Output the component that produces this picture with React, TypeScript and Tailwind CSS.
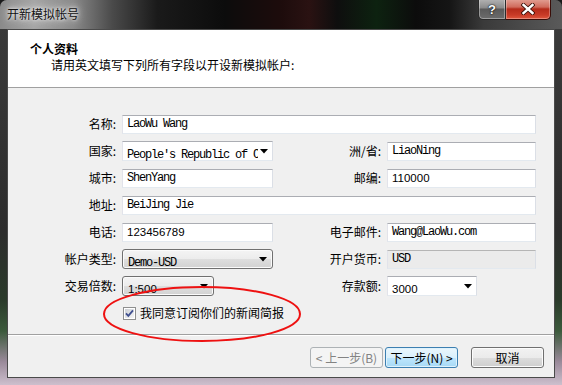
import React from "react";

const mono = "font-['Liberation_Mono',monospace] text-[12px] tracking-[-1.2px]";
const digits = "font-['Liberation_Sans',sans-serif] text-[11.5px]";

function Arrow() {
  return (
    <svg width="8" height="5" viewBox="0 0 8 5" className="shrink-0">
      <polygon points="0,0 8,0 4,4.5" fill="#000" />
    </svg>
  );
}

function TextBox({
  value,
  num = false,
  disabled = false,
  className = "",
}: {
  value: string;
  num?: boolean;
  disabled?: boolean;
  className?: string;
}) {
  return (
    <div
      className={`h-[19px] border border-[#abadb3] border-l-[#e2e3ea] border-r-[#dbdfe6] border-b-[#e3e9ef] ${
        disabled ? "bg-[#ebebeb] border-t-[#b5b5b5] border-l-[#d0d0d0] border-r-[#d0d0d0] border-b-[#d8d8d8]" : "bg-white"
      } flex items-center pl-[4px] overflow-hidden whitespace-nowrap ${className}`}
    >
      <span className={`${num ? digits : mono} leading-[17px] text-black`}>{value}</span>
    </div>
  );
}

function WhiteCombo({ value, num = false, className = "" }: { value: string; num?: boolean; className?: string }) {
  return (
    <div
      className={`h-[20px] border border-[#abadb3] border-l-[#e2e3ea] border-r-[#dbdfe6] border-b-[#e3e9ef] bg-white flex items-center pl-[4px] pr-[4px] gap-[2px] ${className}`}
    >
      <div className="flex-1 overflow-hidden whitespace-nowrap">
        <span className={`${num ? digits : mono} leading-[18px] text-black`}>{value}</span>
      </div>
      <Arrow />
    </div>
  );
}

function ButtonCombo({ value, num = false, className = "" }: { value: string; num?: boolean; className?: string }) {
  return (
    <div
      className={`h-[20px] rounded-[3px] border border-[#707070] bg-[linear-gradient(180deg,#f4f4f4_0%,#ececec_50%,#dedede_51%,#d2d2d2_100%)] shadow-[inset_0_0_0_1px_#fbfbfb] flex items-center pl-[5px] pr-[5px] ${className}`}
    >
      <div className="flex-1 overflow-hidden whitespace-nowrap">
        <span className={`${num ? digits : mono} leading-[18px] text-black`}>{value}</span>
      </div>
      <Arrow />
    </div>
  );
}

function Label({ children }: { children: React.ReactNode }) {
  return <div className="text-right pr-[6px] text-[12px] leading-[16px] text-black whitespace-nowrap">{children}</div>;
}

function CheckBox() {
  return (
    <svg width="13" height="13" viewBox="0 0 13 13" className="shrink-0">
      <defs>
        <linearGradient id="cbg" x1="0" y1="0" x2="1" y2="1">
          <stop offset="0" stopColor="#cbcfd5" />
          <stop offset="1" stopColor="#f6f6f6" />
        </linearGradient>
      </defs>
      <rect x="0.5" y="0.5" width="12" height="12" fill="#fff" stroke="#8e8f8f" />
      <rect x="2" y="2" width="9" height="9" fill="url(#cbg)" />
      <path d="M3 6.3 L5.3 8.8 L10 3.3" fill="none" stroke="#3f4f8f" strokeWidth="1.8" />
    </svg>
  );
}

function WinButton({
  children,
  variant = "normal",
}: {
  children: React.ReactNode;
  variant?: "normal" | "disabled" | "focused";
}) {
  const styles =
    variant === "disabled"
      ? "border-[#adb2b5] bg-[#f4f4f4] text-[#838383]"
      : variant === "focused"
      ? "border-[#3c7fb1] bg-[linear-gradient(180deg,#eaf6fd_0%,#d9f0fc_50%,#bee6fd_51%,#a7d9f5_100%)] text-black shadow-[inset_0_0_0_1px_#dff2fc]"
      : "border-[#707070] bg-[linear-gradient(180deg,#f2f2f2_0%,#ebebeb_50%,#dddddd_51%,#cfcfcf_100%)] text-black shadow-[inset_0_0_0_1px_#fcfcfc]";
  return (
    <div
      className={`w-[73px] h-[21px] rounded-[3px] border flex items-center justify-center text-[12px] leading-[16px] whitespace-nowrap ${styles}`}
    >
      {children}
    </div>
  );
}

export default function App() {
  return (
    <div className="w-[562px] h-[385px] relative overflow-hidden font-['Noto_Sans_CJK_SC','Liberation_Sans',sans-serif] bg-[#1a1a1a]">
      <div className="w-[562px] h-[385px] rounded-t-[7px] overflow-hidden flex flex-col bg-[linear-gradient(180deg,#3c3c3c_0%,#2c2c2c_60%,#2a3a2a_78%,#3c5a3c_86%,#9a8a9a_94%,#cdbfcd_100%)]">
        {/* Title bar */}
        <div className="h-[29px] shrink-0 flex items-start justify-between bg-[linear-gradient(90deg,#8a8a8a_0%,#a5a5a5_6%,#8a8a8a_13%,#4a4a4a_20%,#1a1a1a_28%,#0c0c0c_40%,#1d0c0c_50%,#2a1212_55%,#0e0e0e_60%,#0d2210_67%,#0c0c0c_74%,#151515_80%,#3a3a3a_86%,#5a5a5a_100%)]">
          <span className="ml-[7px] mt-[6px] text-[12px] leading-[16px] text-[#111] [text-shadow:0_0_6px_#e6e6e6,0_0_10px_#dcdcdc,0_0_3px_#ffffff]">
            开新模拟帐号
          </span>
          <div className="flex mr-[11px] -mt-[1px]">
            <div className="w-[28px] h-[21px] rounded-bl-[5px] border border-[#2a2a2a] border-t-0 bg-[linear-gradient(180deg,#b4b4b4_0%,#8a8a8a_45%,#5a5a5a_50%,#6c6c6c_100%)] shadow-[inset_0_0_0_1px_rgba(255,255,255,0.35)] flex items-center justify-center">
              <span className="font-['Liberation_Sans',sans-serif] font-bold text-[13px] leading-[13px] text-white [text-shadow:0_0_2px_#000,0_0_1px_#000]">
                ?
              </span>
            </div>
            <div className="w-[45px] h-[21px] rounded-br-[5px] border border-[#3a0d08] border-t-0 border-l-0 bg-[linear-gradient(180deg,#e3a296_0%,#d06b5c_40%,#b52b1a_50%,#c93b27_80%,#e0583e_100%)] shadow-[inset_0_0_0_1px_rgba(255,255,255,0.3)] flex items-center justify-center">
              <svg width="14" height="12" viewBox="0 0 14 12">
                <path d="M2.5 2 L11.5 10 M11.5 2 L2.5 10" stroke="#3a1008" strokeWidth="4.2" strokeLinecap="square" />
                <path d="M2.5 2 L11.5 10 M11.5 2 L2.5 10" stroke="#ffffff" strokeWidth="2.4" strokeLinecap="square" />
              </svg>
            </div>
          </div>
        </div>

        {/* Client area */}
        <div className="mx-[7px] mb-[7px] flex-1 border border-[#4a4a4a] bg-[#f0f0f0] flex flex-col text-black">
          <div className="h-[58px] shrink-0 bg-white border-b border-[#a0a0a0] pl-[22px] pt-[11px]">
            <div className="font-bold text-[12px] leading-[16px]">个人资料</div>
            <div className="pl-[21px] text-[12px] leading-[16px]">请用英文填写下列所有字段以开设新模拟帐户:</div>
          </div>

          <div className="pt-[26px]">
            <div className="grid grid-cols-[114px_151px_114px_149px] auto-rows-[20px] gap-y-[7px] items-center">
              <Label>名称:</Label>
              <TextBox value="LaoWu Wang" className="col-span-3" />

              <Label>国家:</Label>
              <WhiteCombo value="People's Republic of China" />
              <Label>洲/省:</Label>
              <TextBox value="LiaoNing" />

              <Label>城市:</Label>
              <TextBox value="ShenYang" />
              <Label>邮编:</Label>
              <TextBox value="110000" num />

              <Label>地址:</Label>
              <TextBox value="BeiJing Jie" className="col-span-3" />

              <Label>电话:</Label>
              <TextBox value="123456789" num />
              <Label>电子邮件:</Label>
              <TextBox value="Wang@LaoWu.com" />

              <Label>帐户类型:</Label>
              <ButtonCombo value="Demo-USD" />
              <Label>开户货币:</Label>
              <TextBox value="USD" disabled />

              <Label>交易倍数:</Label>
              <div>
                <ButtonCombo value="1:500" num className="w-[92px]" />
              </div>
              <Label>存款额:</Label>
              <div>
                <WhiteCombo value="3000" num className="w-[90px]" />
              </div>

              <div className="col-start-2 col-span-3 flex items-center pl-[1px] gap-[4px]">
                <CheckBox />
                <span className="text-[12px] leading-[16px]">我同意订阅你们的新闻简报</span>
              </div>
            </div>

            <div className="mt-[11px] border-t border-[#a0a0a0] border-b border-b-white" />

            <div className="flex justify-end pr-[10px] pt-[11px]">
              <WinButton variant="disabled">&lt; 上一步(B)</WinButton>
              <div className="w-[2px]" />
              <WinButton variant="focused">下一步(N) &gt;</WinButton>
              <div className="w-[13px]" />
              <WinButton>取消</WinButton>
            </div>
          </div>
        </div>
      </div>

      {/* red annotation ellipse */}
      <svg className="absolute left-0 top-0 pointer-events-none" width="562" height="385">
        <ellipse cx="202" cy="314" rx="98" ry="27" fill="none" stroke="#ee1111" strokeWidth="2" />
      </svg>
    </div>
  );
}
